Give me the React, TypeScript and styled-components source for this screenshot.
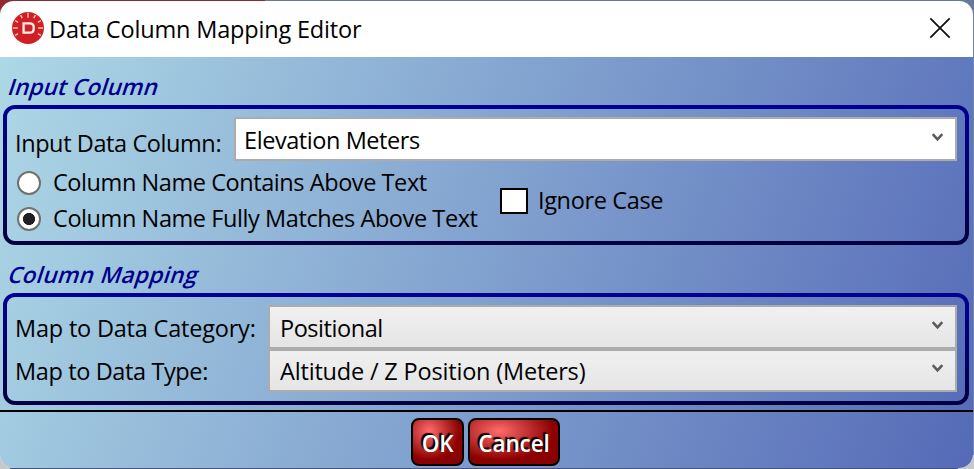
import React from 'react';
import styled, { createGlobalStyle } from 'styled-components';

const GlobalStyle = createGlobalStyle`
  * { box-sizing: border-box; }
  html, body { margin: 0; padding: 0; overflow: hidden; }
  body { font-family: "Open Sans", "Noto Sans", sans-serif; font-size: 23.5px; color: #000; }
`;

const Desktop = styled.div`
  width: 974px;
  height: 469px;
  padding: 1px 1px 1px 0;
  background:
    linear-gradient(90deg, #8f2a30 0 265px, #66799c 265px 100%) 0 0 / 100% 14px no-repeat,
    linear-gradient(90deg, #c8c8c8 0 10px, #46557c 10px 958px, #c8c8c8 958px) 0 100% / 100% 14px no-repeat,
    #7484a8;
`;

const Window = styled.div`
  width: 973px;
  height: 467px;
  display: flex;
  flex-direction: column;
  border-radius: 14px;
  overflow: hidden;
  background: #fff;
`;

const TitleBar = styled.header`
  height: 56px;
  flex: none;
  display: flex;
  align-items: center;
  padding: 0 22px 2px 12px;
`;

const Title = styled.h1`
  margin: 2px auto 0 5px;
  font: inherit;
  line-height: 32px;
  letter-spacing: -0.17px;
  white-space: nowrap;
`;

const CloseButton = styled.button`
  padding: 0;
  border: 0;
  background: none;
  display: flex;
`;

const Content = styled.main`
  flex: 1;
  display: flex;
  flex-direction: column;
  background: linear-gradient(110deg, #add8e6, #556ab7);
`;

const Heading = styled.h2<{ $track: number }>`
  margin: 0;
  height: 48px;
  padding: 14px 0 0 9px;
  font-size: 22.5px;
  line-height: 32px;
  font-weight: 600;
  color: #00008b;
  letter-spacing: ${p => p.$track}px;
  white-space: nowrap;
`;

const Slanted = styled.span`
  display: inline-block;
  transform: skewX(-18deg);
`;

const Frame = styled.section<{ $height: number }>`
  height: ${p => p.$height}px;
  margin: 0 4px 0 3px;
  padding: 4px;
  position: relative;
`;

const FrameOutline = styled.svg`
  position: absolute;
  inset: 0;
  width: 100%;
  height: 100%;
  pointer-events: none;
`;

const InputRow = styled.div`
  display: flex;
  height: 56px;
  padding: 8px 8px 4px 8px;
`;

const Label = styled.label<{ $width?: number; $track: number }>`
  width: ${p => (p.$width ? `${p.$width}px` : 'auto')};
  flex: none;
  line-height: 32px;
  letter-spacing: ${p => p.$track}px;
  white-space: nowrap;
`;

const InputLabel = styled(Label)`
  padding-top: 10px;
`;

const Combo = styled.div<{ $plain?: boolean }>`
  flex: 1;
  display: flex;
  align-items: center;
  justify-content: space-between;
  border: 2px solid #acacac;
  padding: ${p => (p.$plain ? '1px 12px 0 8px' : '1px 12px 0 10px')};
  background: ${p => (p.$plain ? '#fff' : 'linear-gradient(#f0f0f0, #e5e5e5)')};
`;

const ComboText = styled.span<{ $track: number }>`
  line-height: 32px;
  letter-spacing: ${p => p.$track}px;
  white-space: nowrap;
`;

const Options = styled.div`
  display: grid;
  grid-template-columns: 485px 1fr;
  align-items: center;
  padding-left: 8px;
`;

const RadioList = styled.div`
  display: grid;
  grid-template-rows: 36px 36px;
`;

const Choice = styled.div<{ $gap: number }>`
  display: flex;
  align-items: center;
  gap: ${p => p.$gap}px;
`;

const ChoiceLabel = styled(Label)`
  margin-bottom: 2px;
`;

const Radio = styled.span<{ $on?: boolean }>`
  width: 24px;
  height: 24px;
  margin-left: 2px;
  border: 2px solid #707070;
  border-radius: 50%;
  background: ${p => (p.$on ? 'radial-gradient(circle, #212121 5.7px, #fff 6.4px)' : '#fff')};
`;

const Checkbox = styled.span`
  width: 28px;
  height: 26px;
  border: 2px solid #000;
  background: #fff;
`;

const MapGrid = styled.div`
  display: grid;
  grid-template-columns: 253px 1fr;
  grid-template-rows: 44px 43px;
  padding: 8px 8px 0 8px;
`;

const MapLabel = styled(Label)`
  padding-top: 7px;
`;

const TypeLabel = styled(Label)`
  padding-top: 6px;
`;

const Footer = styled.footer`
  flex: 1;
  display: flex;
  justify-content: center;
  gap: 4px;
  margin-top: 5px;
  padding: 6px 2px 0 0;
  border-top: 2px solid #000;
`;

const ActionButton = styled.button<{ $width: number; $track: number }>`
  width: ${p => p.$width}px;
  height: 48px;
  padding: 3px 0 0;
  border: 2px solid #000;
  border-radius: 8px;
  background: radial-gradient(ellipse 62% 66% at 33% 25%, #ff6b6b 0%, #8b0000 100%);
  font: 600 22.5px "Open Sans", sans-serif;
  letter-spacing: ${p => p.$track}px;
  color: #fff;
  text-shadow: -2px -2px 1px #000;
  white-space: nowrap;
`;

const ChevronMark = styled.svg`
  margin-bottom: 4px;
`;

const ticks = [0, 30, 60, 90, 120, 240, 270, 300, 330];

function Logo() {
  return (
    <svg width="32" height="32" viewBox="0 0 32 32">
      <circle cx="16" cy="16" r="16" fill="#d01f27" />
      {ticks.map(a => (
        <path
          key={a}
          d={a % 90 === 0 ? 'M16 .8V5.8' : 'M16 1.2V4.6'}
          stroke="#f7c9a8"
          strokeWidth="1.4"
          transform={`rotate(${a} 16 16)`}
        />
      ))}
      <path d="M11.6 11.3H17.6Q21.7 11.3 21.7 15V17Q21.7 20.7 17.6 20.7H11.6Z" fill="none" stroke="#fff3e6" strokeWidth="2.3" />
    </svg>
  );
}

function Chevron() {
  return (
    <ChevronMark width="11" height="10" viewBox="0 0 11 10">
      <path d="M.7 1.2L5.5 6.4 10.3 1.2" fill="none" stroke="#5c5c5c" strokeWidth="2.6" />
    </ChevronMark>
  );
}

function Outline({ id, height }: { id: string; height: number }) {
  return (
    <FrameOutline>
      <defs>
        <linearGradient id={id} gradientUnits="userSpaceOnUse" x1="0" y1="0" x2="0" y2={height}>
          <stop offset="0" stopColor="#000094" />
          <stop offset="1" stopColor="#000040" />
        </linearGradient>
      </defs>
      <rect x="2" y="2" width="962" height={height - 4} rx="10" fill="none" stroke={`url(#${id})`} strokeWidth="4" />
    </FrameOutline>
  );
}

export default function App() {
  return (
    <Desktop>
      <GlobalStyle />
      <Window>
        <TitleBar>
          <Logo />
          <Title>Data Column Mapping Editor</Title>
          <CloseButton aria-label="Close">
            <svg width="22" height="22" viewBox="0 0 22 22">
              <path d="M1.3 1.3L20.7 20.7M20.7 1.3L1.3 20.7" stroke="#111" strokeWidth="1.8" />
            </svg>
          </CloseButton>
        </TitleBar>
        <Content>
          <Heading $track={0.12}><Slanted>Input Column</Slanted></Heading>
          <Frame $height={140}>
            <Outline id="inputEdge" height={140} />
            <InputRow>
              <InputLabel $width={219} $track={-0.41}>Input Data Column:</InputLabel>
              <Combo $plain>
                <ComboText $track={-0.43}>Elevation Meters</ComboText>
                <Chevron />
              </Combo>
            </InputRow>
            <Options>
              <RadioList>
                <Choice $gap={12}>
                  <Radio />
                  <ChoiceLabel $track={-0.43}>Column Name Contains Above Text</ChoiceLabel>
                </Choice>
                <Choice $gap={12}>
                  <Radio $on />
                  <ChoiceLabel $track={-0.42}>Column Name Fully Matches Above Text</ChoiceLabel>
                </Choice>
              </RadioList>
              <Choice $gap={10}>
                <Checkbox />
                <ChoiceLabel $track={-0.35}>Ignore Case</ChoiceLabel>
              </Choice>
            </Options>
          </Frame>
          <Heading $track={0.33}><Slanted>Column Mapping</Slanted></Heading>
          <Frame $height={112}>
            <Outline id="mapEdge" height={112} />
            <MapGrid>
              <MapLabel $track={-0.2}>Map to Data Category:</MapLabel>
              <Combo>
                <ComboText $track={-0.45}>Positional</ComboText>
                <Chevron />
              </Combo>
              <TypeLabel $track={-0.38}>Map to Data Type:</TypeLabel>
              <Combo>
                <ComboText $track={-0.18}>Altitude / Z Position (Meters)</ComboText>
                <Chevron />
              </Combo>
            </MapGrid>
          </Frame>
          <Footer>
            <ActionButton $width={53} $track={-0.3}>OK</ActionButton>
            <ActionButton $width={92} $track={-0.1}>Cancel</ActionButton>
          </Footer>
        </Content>
      </Window>
    </Desktop>
  );
}
